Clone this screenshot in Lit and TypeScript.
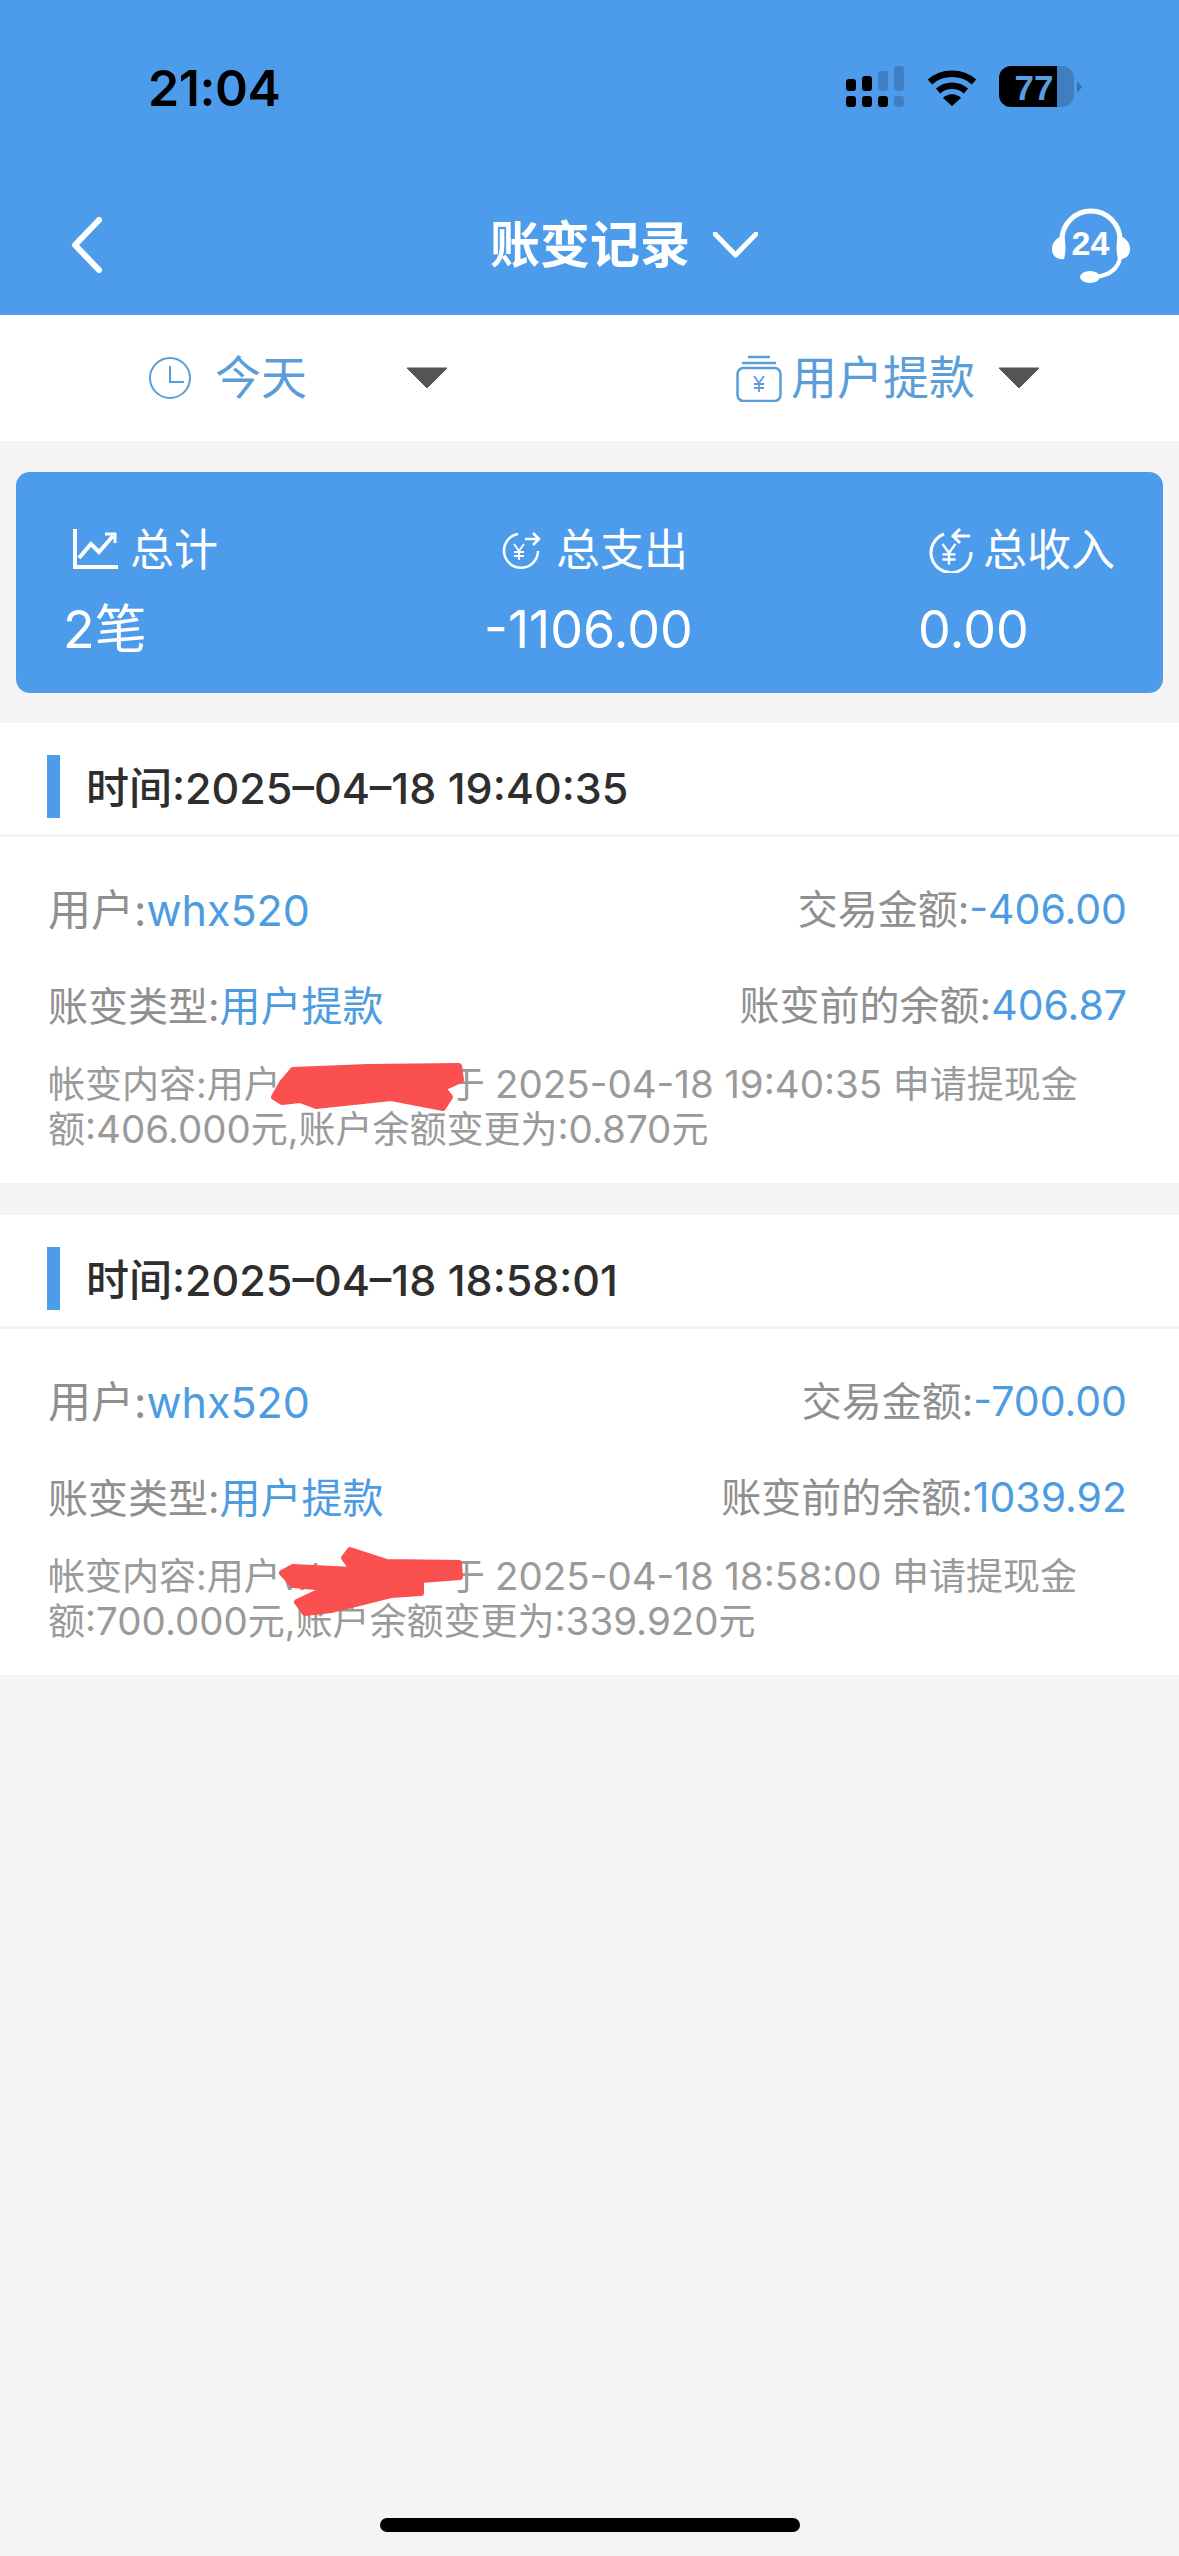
import {LitElement, html, css, svg} from 'lit';
import {customElement} from 'lit/decorators.js';

const records = [
  {
    top: 723,
    time: '2025–04–18 19:40:35',
    amount: '-406.00',
    before: '406.87',
    text: '于 2025-04-18 19:40:35 申请提现金额:406.000元,账户余额变更为:0.870元',
    scribble:
      '293,1070 368,1067 459,1066 461,1080 443,1088 450,1097 443,1108 391,1098 316,1106 300,1100 282,1102 274,1097 282,1083',
  },
  {
    top: 1215,
    time: '2025–04–18 18:58:01',
    amount: '-700.00',
    before: '1039.92',
    text: '于 2025-04-18 18:58:00 申请提现金额:700.000元,账户余额变更为:339.920元',
    scribble:
      '350,1550 387,1562 459,1563 460,1577 421,1580 421,1593 391,1595 331,1610 305,1613 297,1602 327,1588 293,1585 282,1573 293,1567 353,1570 344,1558',
  },
];

const yen = svg`<path d="M-5 -7 L0 0 L5 -7 M0 0 V9 M-5 1 H5 M-5 5 H5" fill="none" stroke="currentColor" stroke-width="1.8"/>`;

@customElement('app-root')
export class AppRoot extends LitElement {
  static styles = css`
    :host {
      display: flex;
      flex-direction: column;
      width: 1179px;
      min-height: 2556px;
      background: #f4f4f4;
      font-family: Inter, "Noto Sans CJK SC", sans-serif;
    }
    svg { display: block; flex: none; }

    .header { height: 315px; background: #4d9ceb; }
    .status { display: flex; height: 175px; box-sizing: border-box; padding: 66px 96px 0 148px; }
    .clock { font-size: 50px; line-height: 44px; font-weight: 600; color: #000; letter-spacing: -0.4px; }
    .status-icons { display: flex; margin-left: auto; align-items: flex-start; }
    .wifi { margin: 2px 22px 0 23px; }
    .nav { display: grid; grid-template-columns: 419px 1fr auto; align-items: center; height: 140px; padding-right: 49px; }
    .back { margin-left: 71px; }
    .title { display: flex; align-items: center; gap: 23px; margin-left: 71px; }
    .title span { font-size: 50px; line-height: 60px; font-weight: 700; color: #fff; }

    .filter { display: grid; grid-template-columns: 736px 1fr; height: 126px; background: #fff; color: #5b9dd9; }
    .filter-item { display: flex; align-items: center; }
    .filter-item.today { padding-left: 149px; }
    .filter-item span { font-size: 46px; line-height: 60px; margin-top: -3px; }
    .today span { margin-left: 24px; }
    .today .tri { margin-left: 99px; }
    .kind span { margin-left: 9px; }
    .kind .tri { margin-left: 23px; }

    .summary {
      display: grid;
      grid-template-columns: 421px 434px 1fr;
      box-sizing: border-box;
      height: 221px;
      margin: 31px 16px 30px;
      padding: 47px 0 0 47px;
      background: #4d9ceb;
      border-radius: 14px;
      color: #fff;
    }
    .sum-label { display: flex; align-items: center; height: 60px; font-size: 44px; }
    .sum-label span { margin-top: -4px; }
    .sum-label.c1 { margin-left: 10px; gap: 12px; }
    .sum-label.c2 { margin-left: 17px; gap: 15px; }
    .sum-label.c3 { margin-left: 8px; gap: 9px; }
    .sum-value { margin-top: 18px; font-size: 52px; line-height: 66px; }

    .record { position: relative; background: #fff; margin-bottom: 32px; }
    .scribble { position: absolute; left: 0; top: 0; pointer-events: none; }
    .rec-head {
      display: flex;
      align-items: flex-start;
      gap: 26px;
      height: 114px;
      box-sizing: border-box;
      padding: 32px 0 0 47px;
      border-bottom: 3px solid #f3f3f3;
    }
    .bar { width: 13px; height: 63px; background: #4d9ceb; }
    .rec-time { font-size: 43px; line-height: 66px; font-weight: 500; color: #2e2e2e; }
    .rec-body { height: 346px; box-sizing: border-box; padding: 40px 52px 0 48px; color: #8f8f8f; }
    .row { display: flex; justify-content: space-between; align-items: center; height: 60px; margin-bottom: 36px; font-size: 40px; }
    .row .big { font-size: 43px; }
    .val { color: #4d9be0; font-size: 41px; }
    .big .val { font-size: 43px; }
    .desc { width: 1060px; margin-top: -7px; font-size: 37px; line-height: 45px; color: #9a9a9a; }
    .desc .n { font-size: 38.5px; }
    .hidden-name { display: inline-block; width: 167px; }

    .spacer { flex: 1; }
    .home { width: 420px; height: 14px; margin: 0 auto 24px; border-radius: 7px; background: #000; }
  `;

  private triangle() {
    return html`<svg class="tri" width="42" height="22" viewBox="0 0 42 22"><path d="M1 1 H41 L21 21 Z" fill="#555" stroke="#555" stroke-linejoin="round"/></svg>`;
  }

  private statusIcons() {
    return html`<div class="status-icons">
      <svg width="58" height="41" viewBox="0 0 58 41">
        <g fill="#000">
          <rect x="0" y="13" width="10" height="12" rx="3"/>
          <rect x="16" y="10" width="10" height="15" rx="3"/>
          <rect x="0" y="30" width="10" height="11" rx="3"/>
          <rect x="16" y="30" width="10" height="11" rx="3"/>
          <rect x="32" y="30" width="10" height="11" rx="3"/>
        </g>
        <g fill="#3f7fc1">
          <rect x="32" y="5" width="10" height="20" rx="3"/>
          <rect x="48" y="0" width="10" height="25" rx="3"/>
          <rect x="48" y="30" width="10" height="11" rx="3"/>
        </g>
      </svg>
      <svg class="wifi" width="50" height="38" viewBox="0 0 50 38">
        <path d="M3 14 C15 3 35 3 47 14" fill="none" stroke="#000" stroke-width="6.5"/>
        <path d="M11 23 C19 16 31 16 39 23" fill="none" stroke="#000" stroke-width="6.5"/>
        <path d="M16 30 C21 25 29 25 34 30 L25 38 Z" fill="#000"/>
      </svg>
      <svg width="84" height="41" viewBox="0 0 84 41">
        <rect x="0" y="0" width="75" height="41" rx="12" fill="#3f7fc1"/>
        <path d="M12 0 H58 V41 H12 A12 12 0 0 1 0 29 V12 A12 12 0 0 1 12 0 Z" fill="#000"/>
        <path d="M78 15 L83 21 L78 27 Z" fill="#2f73b8"/>
        <text x="35" y="34" text-anchor="middle" font-size="35" font-weight="700" fill="#5a9fe0" font-family="Liberation Sans, sans-serif">77</text>
      </svg>
    </div>`;
  }

  private headset() {
    return html`<svg width="78" height="75" viewBox="0 0 78 75">
      <path d="M10 32 A29 29 0 0 1 68 32" fill="none" stroke="#fff" stroke-width="5"/>
      <path d="M12 28 C4 29 0 35 0 41 C0 48 5 52 12 51 C14 44 14 35 12 28 Z" fill="#fff"/>
      <path d="M66 28 C74 29 78 35 78 41 C78 48 73 52 66 51 C64 44 64 35 66 28 Z" fill="#fff"/>
      <path d="M68 50 C66 60 58 67 44 69" fill="none" stroke="#fff" stroke-width="4"/>
      <ellipse cx="38" cy="69" rx="10" ry="6" fill="#fff"/>
      <text x="38.500" y="47" text-anchor="middle" font-size="34" font-weight="700" fill="#fff" font-family="Liberation Sans, sans-serif">24</text>
    </svg>`;
  }

  // digits read a little larger than the CJK around them
  private withNumbers(text: string) {
    return text.split(/([\d.:-]{2,})/).map((part, i) => (i % 2 ? html`<span class="n">${part}</span>` : part));
  }

  private record(r: (typeof records)[number]) {
    return html`<section class="record">
      <div class="rec-head">
        <div class="bar"></div>
        <div class="rec-time">时间:${r.time}</div>
      </div>
      <div class="rec-body">
        <div class="row">
          <div class="big">用户:<span class="val">whx520</span></div>
          <div>交易金额:<span class="val">${r.amount}</span></div>
        </div>
        <div class="row">
          <div>账变类型:<span class="val">用户提款</span></div>
          <div>账变前的余额:<span class="val">${r.before}</span></div>
        </div>
        <div class="desc">帐变内容:用户<span class="hidden-name">whx520</span>${this.withNumbers(r.text)}</div>
      </div>
      <svg class="scribble" width="1179" height="460" viewBox="0 ${r.top} 1179 460">
        <polygon points=${r.scribble} fill="#fb5050" stroke="#fb5050" stroke-width="6" stroke-linejoin="round"/>
      </svg>
    </section>`;
  }

  protected render() {
    return html`
      <div class="header">
        <div class="status">
          <div class="clock">21:04</div>
          ${this.statusIcons()}
        </div>
        <div class="nav">
          <svg class="back" width="32" height="56" viewBox="0 0 32 56">
            <path d="M28 3 L4 28 L28 53" fill="none" stroke="#fff" stroke-width="6" stroke-linecap="round" stroke-linejoin="round"/>
          </svg>
          <div class="title">
            <span>账变记录</span>
            <svg width="45" height="26" viewBox="0 0 45 26"><path d="M2 2 L22.500 23 L43 2" fill="none" stroke="#fff" stroke-width="5" stroke-linecap="round" stroke-linejoin="round"/></svg>
          </div>
          ${this.headset()}
        </div>
      </div>

      <div class="filter">
        <div class="filter-item today">
          <svg width="42" height="42" viewBox="0 0 42 42" fill="none" stroke="currentColor" stroke-width="2">
            <circle cx="21" cy="21" r="20"/>
            <path d="M21 9 V25 H35"/>
          </svg>
          <span>今天</span>
          ${this.triangle()}
        </div>
        <div class="filter-item kind">
          <svg width="46" height="47" viewBox="0 0 46 47" fill="none" stroke="currentColor" stroke-width="2.500">
            <path d="M12 2 H34 M6 8 H40"/>
            <rect x="1.500" y="13" width="43" height="33" rx="6"/>
            <g transform="translate(23 28)" stroke-width="1">${yen}</g>
          </svg>
          <span>用户提款</span>
          ${this.triangle()}
        </div>
      </div>

      <div class="summary">
        <div>
          <div class="sum-label c1">
            <svg width="45" height="40" viewBox="0 0 45 40" fill="none" stroke="#fff" stroke-width="4">
              <path d="M2 0 V38 H45"/>
              <path d="M6 29 L18 15 L26 23 L40 7"/>
              <path d="M32 5 H42 V14" stroke-width="3"/>
            </svg>
            <span>总计</span>
          </div>
          <div class="sum-value">2笔</div>
        </div>
        <div>
          <div class="sum-label c2">
            <svg width="40" height="40" viewBox="0 0 40 40" fill="none" stroke="#fff" stroke-width="2.500">
              <path d="M17 5 A17 17 0 1 0 37 22"/>
              <path d="M24 10 H38 M32 4 L38 10 L32 16"/>
              <g transform="translate(18 22)">${yen}</g>
            </svg>
            <span>总支出</span>
          </div>
          <div class="sum-value">-1106.00</div>
        </div>
        <div>
          <div class="sum-label c3">
            <svg width="48" height="48" viewBox="0 0 48 48" fill="none" stroke="#fff" stroke-width="3">
              <path d="M18 9 A20 20 0 1 0 45 27"/>
              <path d="M44 11 H28 M34 4 L27 11 L34 18"/>
              <g transform="translate(23 28) scale(1.300)">${yen}</g>
            </svg>
            <span>总收入</span>
          </div>
          <div class="sum-value">0.00</div>
        </div>
      </div>

      ${records.map((r) => this.record(r))}

      <div class="spacer"></div>
      <div class="home"></div>
    `;
  }
}
